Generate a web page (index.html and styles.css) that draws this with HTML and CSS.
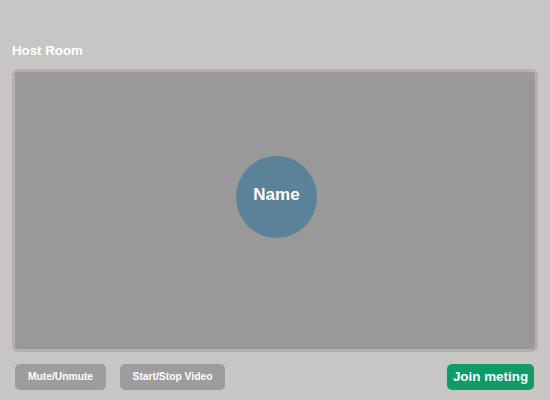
FILE: index.html
```html
<!DOCTYPE html>
<html>
<head>
<meta charset="utf-8">
<link rel="stylesheet" href="styles.css">
</head>
<body>
<div class="page">
  <h1 class="title">Host Room</h1>
  <div class="stage">
    <div class="avatar">Name</div>
  </div>
  <div class="controls">
    <button class="btn btn-mute">Mute/Unmute</button>
    <button class="btn btn-video">Start/Stop Video</button>
    <button class="btn btn-join">Join meting</button>
  </div>
</div>
</body>
</html>
```
FILE: styles.css
```css
html, body {
  margin: 0;
  padding: 0;
  background: #c8c6c4;
  font-family: "Liberation Sans", Arial, sans-serif;
}
.page {
  width: 550px;
  height: 400px;
  box-sizing: border-box;
  padding: 41px 12px 0 12px;
}
.title {
  margin: 0 0 8px 0;
  font-size: 13.3px;
  line-height: 20px;
  font-weight: bold;
  color: #ffffff;
}
.stage {
  height: 283px;
  box-sizing: border-box;
  border: 3px solid #b8aeb0;
  border-radius: 6px;
  background: #999999;
  display: flex;
  align-items: center;
  justify-content: center;
  padding: 0 0 27px 3px;
}
.avatar {
  width: 81px;
  height: 82px;
  box-sizing: border-box;
  padding-bottom: 4px;
  border-radius: 50%;
  background: #5b8299;
  color: #ffffff;
  font-weight: bold;
  font-size: 17px;
  display: flex;
  align-items: center;
  justify-content: center;
}
.controls {
  display: flex;
  align-items: center;
  margin-top: 12px;
  padding: 0 4px 0 3px;
}
.btn {
  border: none;
  margin: 0;
  height: 26px;
  border-radius: 5px;
  color: #ffffff;
  font-family: "Liberation Sans", Arial, sans-serif;
  font-weight: bold;
  font-size: 10.3px;
  padding: 0 0 2px 0;
  text-align: center;
}
.btn-mute {
  width: 91px;
  background: #9d9d9d;
}
.btn-video {
  width: 105px;
  margin-left: 14px;
  background: #9d9d9d;
}
.btn-join {
  width: 87px;
  margin-left: auto;
  background: #0f9a66;
  font-size: 13.4px;
}
```
